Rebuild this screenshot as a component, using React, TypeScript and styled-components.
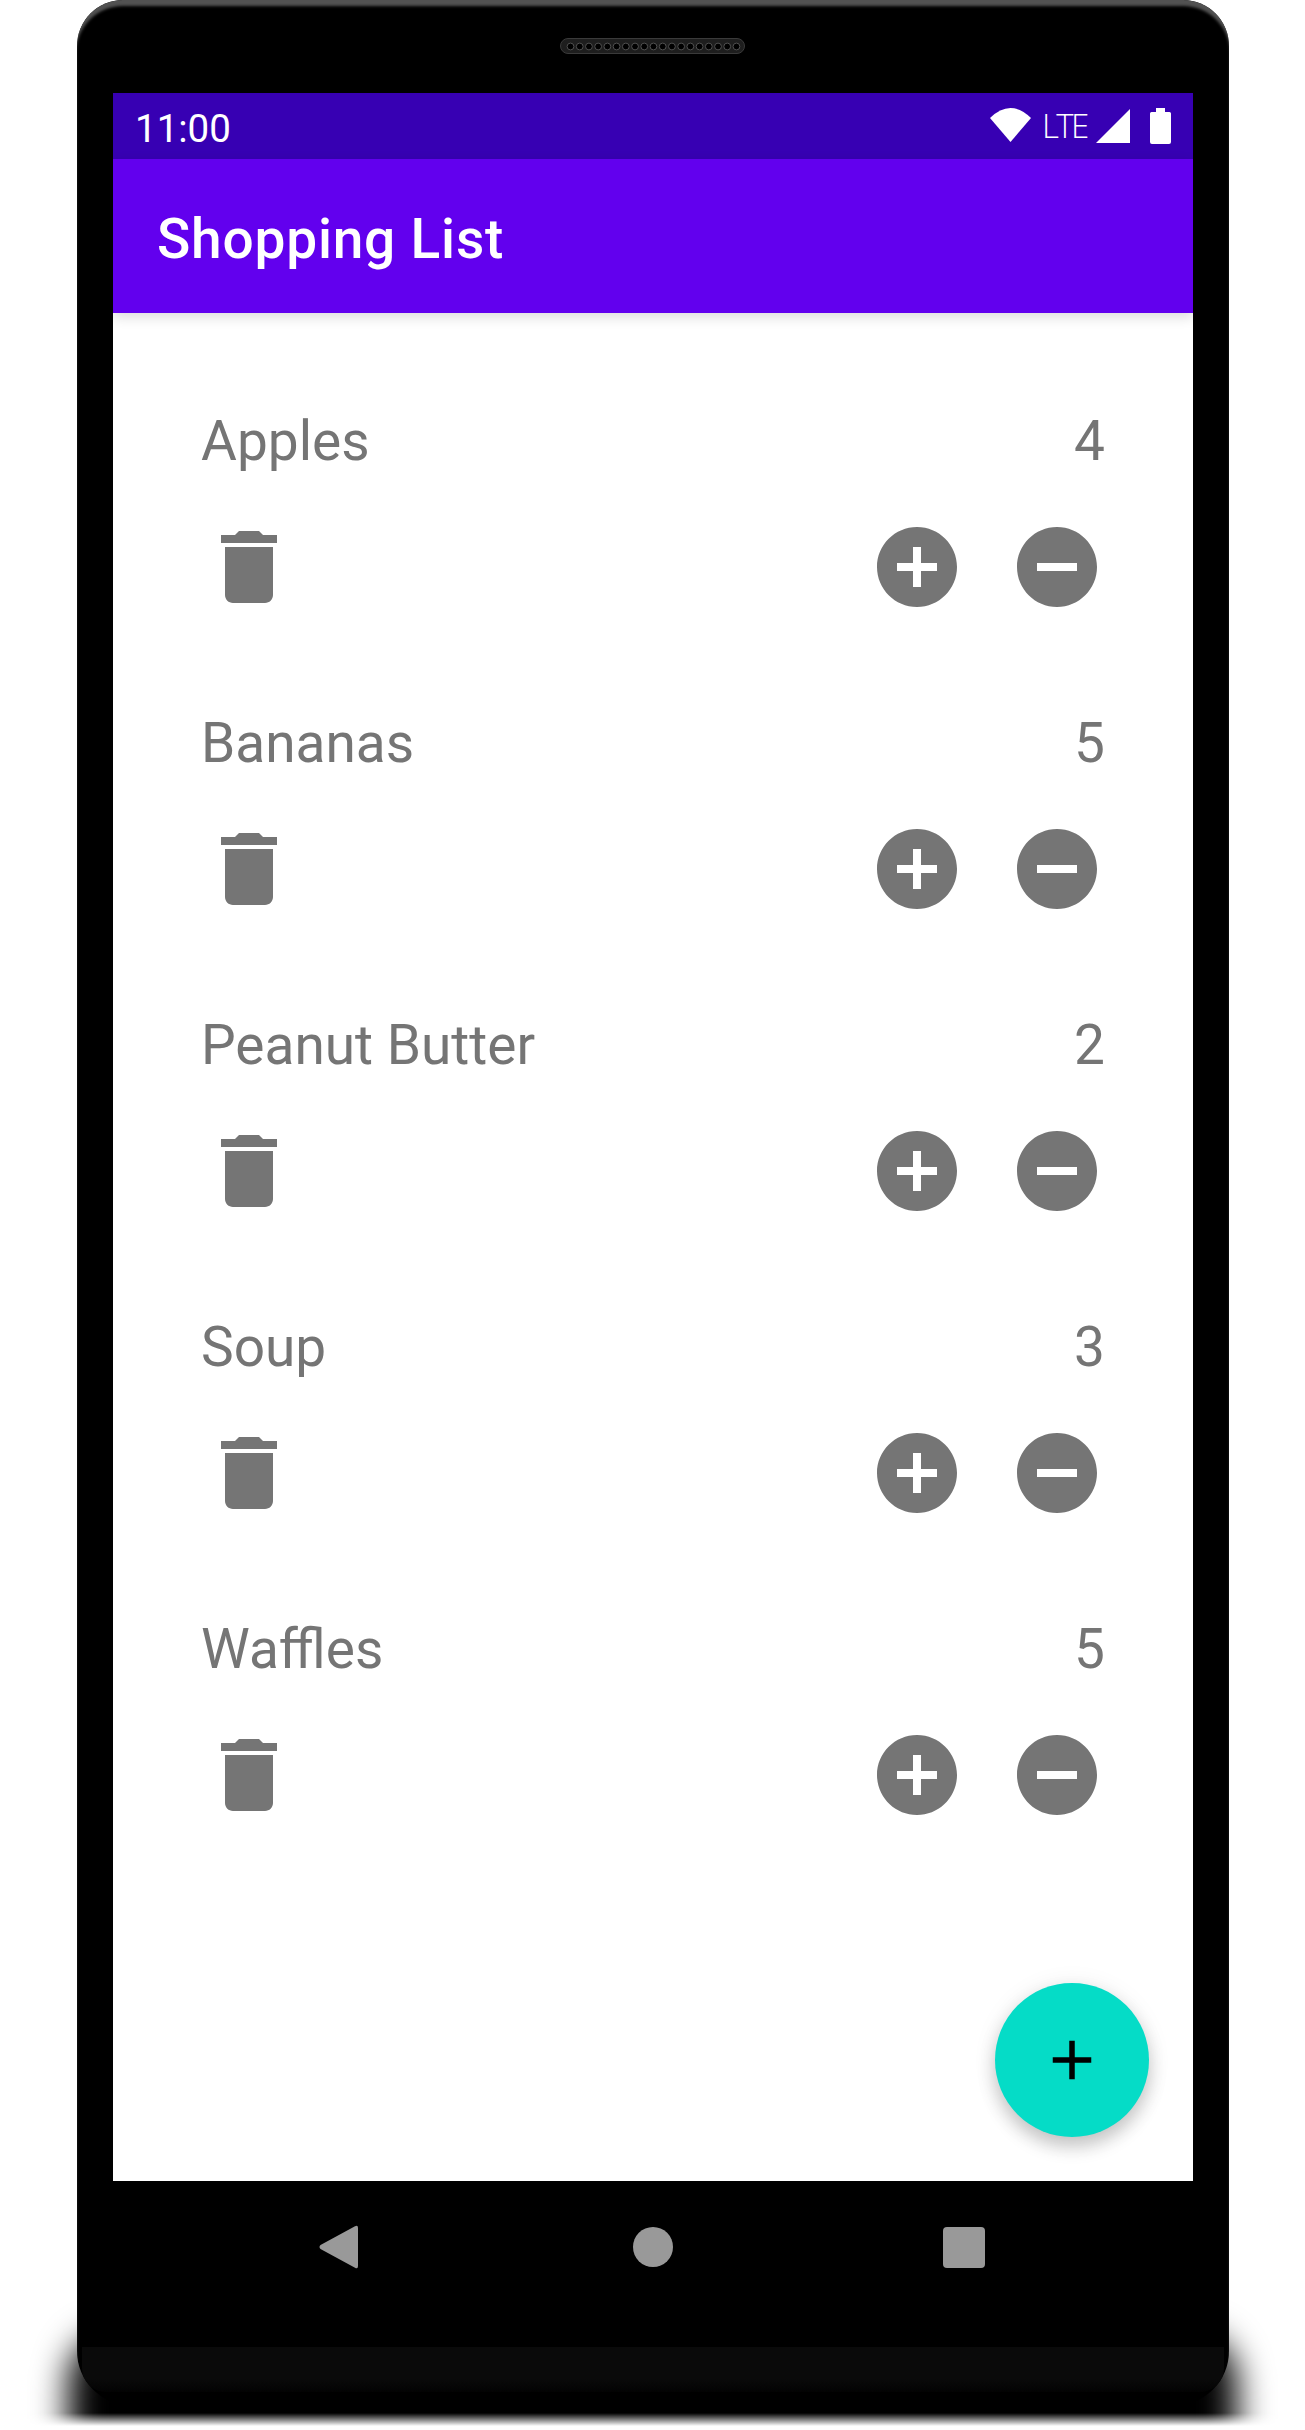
import React from "react";
import styled, { createGlobalStyle } from "styled-components";

const GlobalStyle = createGlobalStyle`
  html, body { margin: 0; padding: 0; background: #fff; }
  * { box-sizing: border-box; }
`;

const Stage = styled.div`
  position: relative;
  width: 1305px;
  height: 2430px;
  overflow: hidden;
  background: #fff;
  font-family: Roboto, "Liberation Sans", sans-serif;
`;

const GroundClip = styled.div`
  position: absolute;
  left: 0;
  top: 2270px;
  width: 1305px;
  height: 156px;
  overflow: hidden;
  -webkit-mask-image: linear-gradient(#000 calc(100% - 13px), transparent);
  mask-image: linear-gradient(#000 calc(100% - 13px), transparent);
`;

const GroundShadow = styled.div`
  position: absolute;
  left: 68px;
  top: 62px;
  width: 1169px;
  height: 200px;
  background: #000;
  border-radius: 50px;
  filter: blur(17px);
`;

const Phone = styled.div`
  position: relative;
  margin-left: 77px;
  width: 1152px;
  height: 2405px;
  padding: 93px 36px 0;
  background: #000;
  border-radius: 46px 46px 54px 54px;
  box-shadow: inset 0 7px 3px -1px #525252;
`;

const Speaker = styled.svg`
  position: absolute;
  left: 483px;
  top: 38px;
  width: 185px;
  height: 16px;
`;

const BottomGloss = styled.div`
  position: absolute;
  left: 5px;
  right: 5px;
  bottom: 13px;
  height: 45px;
  background: linear-gradient(#0a0a0a, #0a0a0a 70%, #030303);
  border-radius: 0 0 24px 24px;
`;

const Screen = styled.div`
  position: relative;
  width: 1080px;
  height: 2088px;
  background: #fff;
  overflow: hidden;
`;

const StatusBar = styled.div`
  display: flex;
  align-items: flex-start;
  height: 66px;
  padding: 13px 22px 0 22px;
  background: #3700b3;
  color: #fff;
`;

const Clock = styled.span`
  flex: 1;
  font-size: 38.5px;
  line-height: 45px;
`;

const StatusIcons = styled.div`
  display: flex;
  align-items: flex-start;
  padding-top: 2px;
`;

const WifiIcon = styled.svg`
  width: 41px;
  height: 34px;
  margin-right: 11px;
`;

const Lte = styled.span`
  width: 54px;
  font-family: "Open Sans", sans-serif;
  font-size: 33px;
  font-weight: 300;
  line-height: 36px;
  letter-spacing: -2.6px;
`;

const SignalIcon = styled.svg`
  width: 34px;
  height: 34px;
  margin-top: 1px;
  margin-right: 20px;
`;

const BatteryIcon = styled.svg`
  width: 21px;
  height: 36px;
`;

const AppBar = styled.header`
  position: relative;
  z-index: 1;
  display: flex;
  align-items: center;
  height: 154px;
  padding: 5px 0 0 44px;
  background: #6200ee;
  box-shadow: 0 4px 12px rgba(0, 0, 0, 0.14);
`;

const Title = styled.h1`
  margin: 0;
  color: #fff;
  font-size: 55px;
  font-weight: 500;
  line-height: 66px;
  letter-spacing: 0.8px;
`;

const List = styled.div`
  display: flex;
  flex-direction: column;
  gap: 96px;
  padding: 96px 88px 0;
`;

const Item = styled.div`
  display: flex;
  flex-direction: column;
  gap: 46px;
`;

const ItemHead = styled.div`
  display: flex;
  justify-content: space-between;
  color: #757575;
  font-size: 55px;
  line-height: 64px;
`;

const ItemActions = styled.div`
  display: flex;
  align-items: center;
  gap: 44px;
`;

const ActionIcon = styled.svg<{ $push?: boolean }>`
  width: 96px;
  height: 96px;
  fill: #757575;
  margin-right: ${(p) => (p.$push ? "auto" : "0")};
`;

const Fab = styled.button`
  position: absolute;
  right: 44px;
  bottom: 44px;
  display: flex;
  align-items: center;
  justify-content: center;
  width: 154px;
  height: 154px;
  padding: 0;
  border: 0;
  border-radius: 50%;
  background: #05dcc7;
  box-shadow: 0 10px 18px rgba(0, 0, 0, 0.2), 0 2px 24px rgba(0, 0, 0, 0.08);
`;

const FabIcon = styled.svg`
  width: 66px;
  height: 66px;
  fill: #000;
`;

const NavBar = styled.nav`
  display: flex;
  align-items: center;
  height: 44px;
  margin-top: 44px;
  padding-left: 206px;
`;

const NavBack = styled.svg`
  width: 39px;
  height: 44px;
  margin-right: 275px;
`;

const NavHome = styled.div`
  width: 40px;
  height: 40px;
  margin-right: 270px;
  border-radius: 50%;
  background: #999;
`;

const NavRecent = styled.div`
  width: 42px;
  height: 41px;
  border-radius: 4px;
  background: #999;
`;

const items = [
  { name: "Apples", qty: 4 },
  { name: "Bananas", qty: 5 },
  { name: "Peanut Butter", qty: 2 },
  { name: "Soup", qty: 3 },
  { name: "Waffles", qty: 5 },
];

const holes = Array.from({ length: 19 }, (_, i) => 10.5 + i * 9.22);

export default function App() {
  return (
    <Stage>
      <GlobalStyle />
      <GroundClip>
        <GroundShadow />
      </GroundClip>
      <Phone>
        <Speaker viewBox="0 0 185 16">
          <rect x="0.5" y="0.5" width="184" height="15" rx="7.5" fill="#1e1e1e" stroke="#3a3a3a" />
          {holes.map((x) => (
            <circle key={x} cx={x} cy="8.5" r="3.4" fill="#000" stroke="#505050" strokeWidth="1" />
          ))}
        </Speaker>
        <BottomGloss />
        <Screen>
          <StatusBar>
            <Clock>11:00</Clock>
            <StatusIcons>
              <WifiIcon viewBox="0 0 41 34">
                <path d="M0 10Q20.5-10 41 10L20.5 34Z" fill="#fff" />
              </WifiIcon>
              <Lte>LTE</Lte>
              <SignalIcon viewBox="0 0 34 34">
                <path d="M0 34L34 0V34Z" fill="#fff" />
              </SignalIcon>
              <BatteryIcon viewBox="0 0 21 36">
                <path
                  d="M6 0H15V4H19.5Q21 4 21 5.5V34Q21 36 19 36H2Q0 36 0 34V5.5Q0 4 1.500 4H6Z"
                  fill="#fff"
                />
              </BatteryIcon>
            </StatusIcons>
          </StatusBar>
          <AppBar>
            <Title>Shopping List</Title>
          </AppBar>
          <List>
            {items.map((item) => (
              <Item key={item.name}>
                <ItemHead>
                  <span>{item.name}</span>
                  <span>{item.qty}</span>
                </ItemHead>
                <ItemActions>
                  <ActionIcon $push viewBox="0 0 24 24">
                    <path d="M6 19c0 1.100.9 2 2 2h8c1.100 0 2-.9 2-2V7H6v12zM19 4h-3.500l-1-1h-5l-1 1H5v2h14V4z" />
                  </ActionIcon>
                  <ActionIcon viewBox="0 0 24 24">
                    <path d="M12 2C6.480 2 2 6.480 2 12s4.480 10 10 10 10-4.480 10-10S17.520 2 12 2zm5 11h-4v4h-2v-4H7v-2h4V7h2v4h4v2z" />
                  </ActionIcon>
                  <ActionIcon viewBox="0 0 24 24">
                    <path d="M12 2C6.480 2 2 6.480 2 12s4.480 10 10 10 10-4.480 10-10S17.520 2 12 2zm5 11H7v-2h10v2z" />
                  </ActionIcon>
                </ItemActions>
              </Item>
            ))}
          </List>
          <Fab>
            <FabIcon viewBox="0 0 24 24">
              <path d="M19 13h-6v6h-2v-6H5v-2h6V5h2v6h6v2z" />
            </FabIcon>
          </Fab>
        </Screen>
        <NavBar>
          <NavBack viewBox="0 0 39 44">
            <path
              d="M36 1.200Q39-.5 39 3V41Q39 44.500 36 42.800L1.500 24Q-.5 22 1.500 20Z"
              fill="#999"
            />
          </NavBack>
          <NavHome />
          <NavRecent />
        </NavBar>
      </Phone>
    </Stage>
  );
}
